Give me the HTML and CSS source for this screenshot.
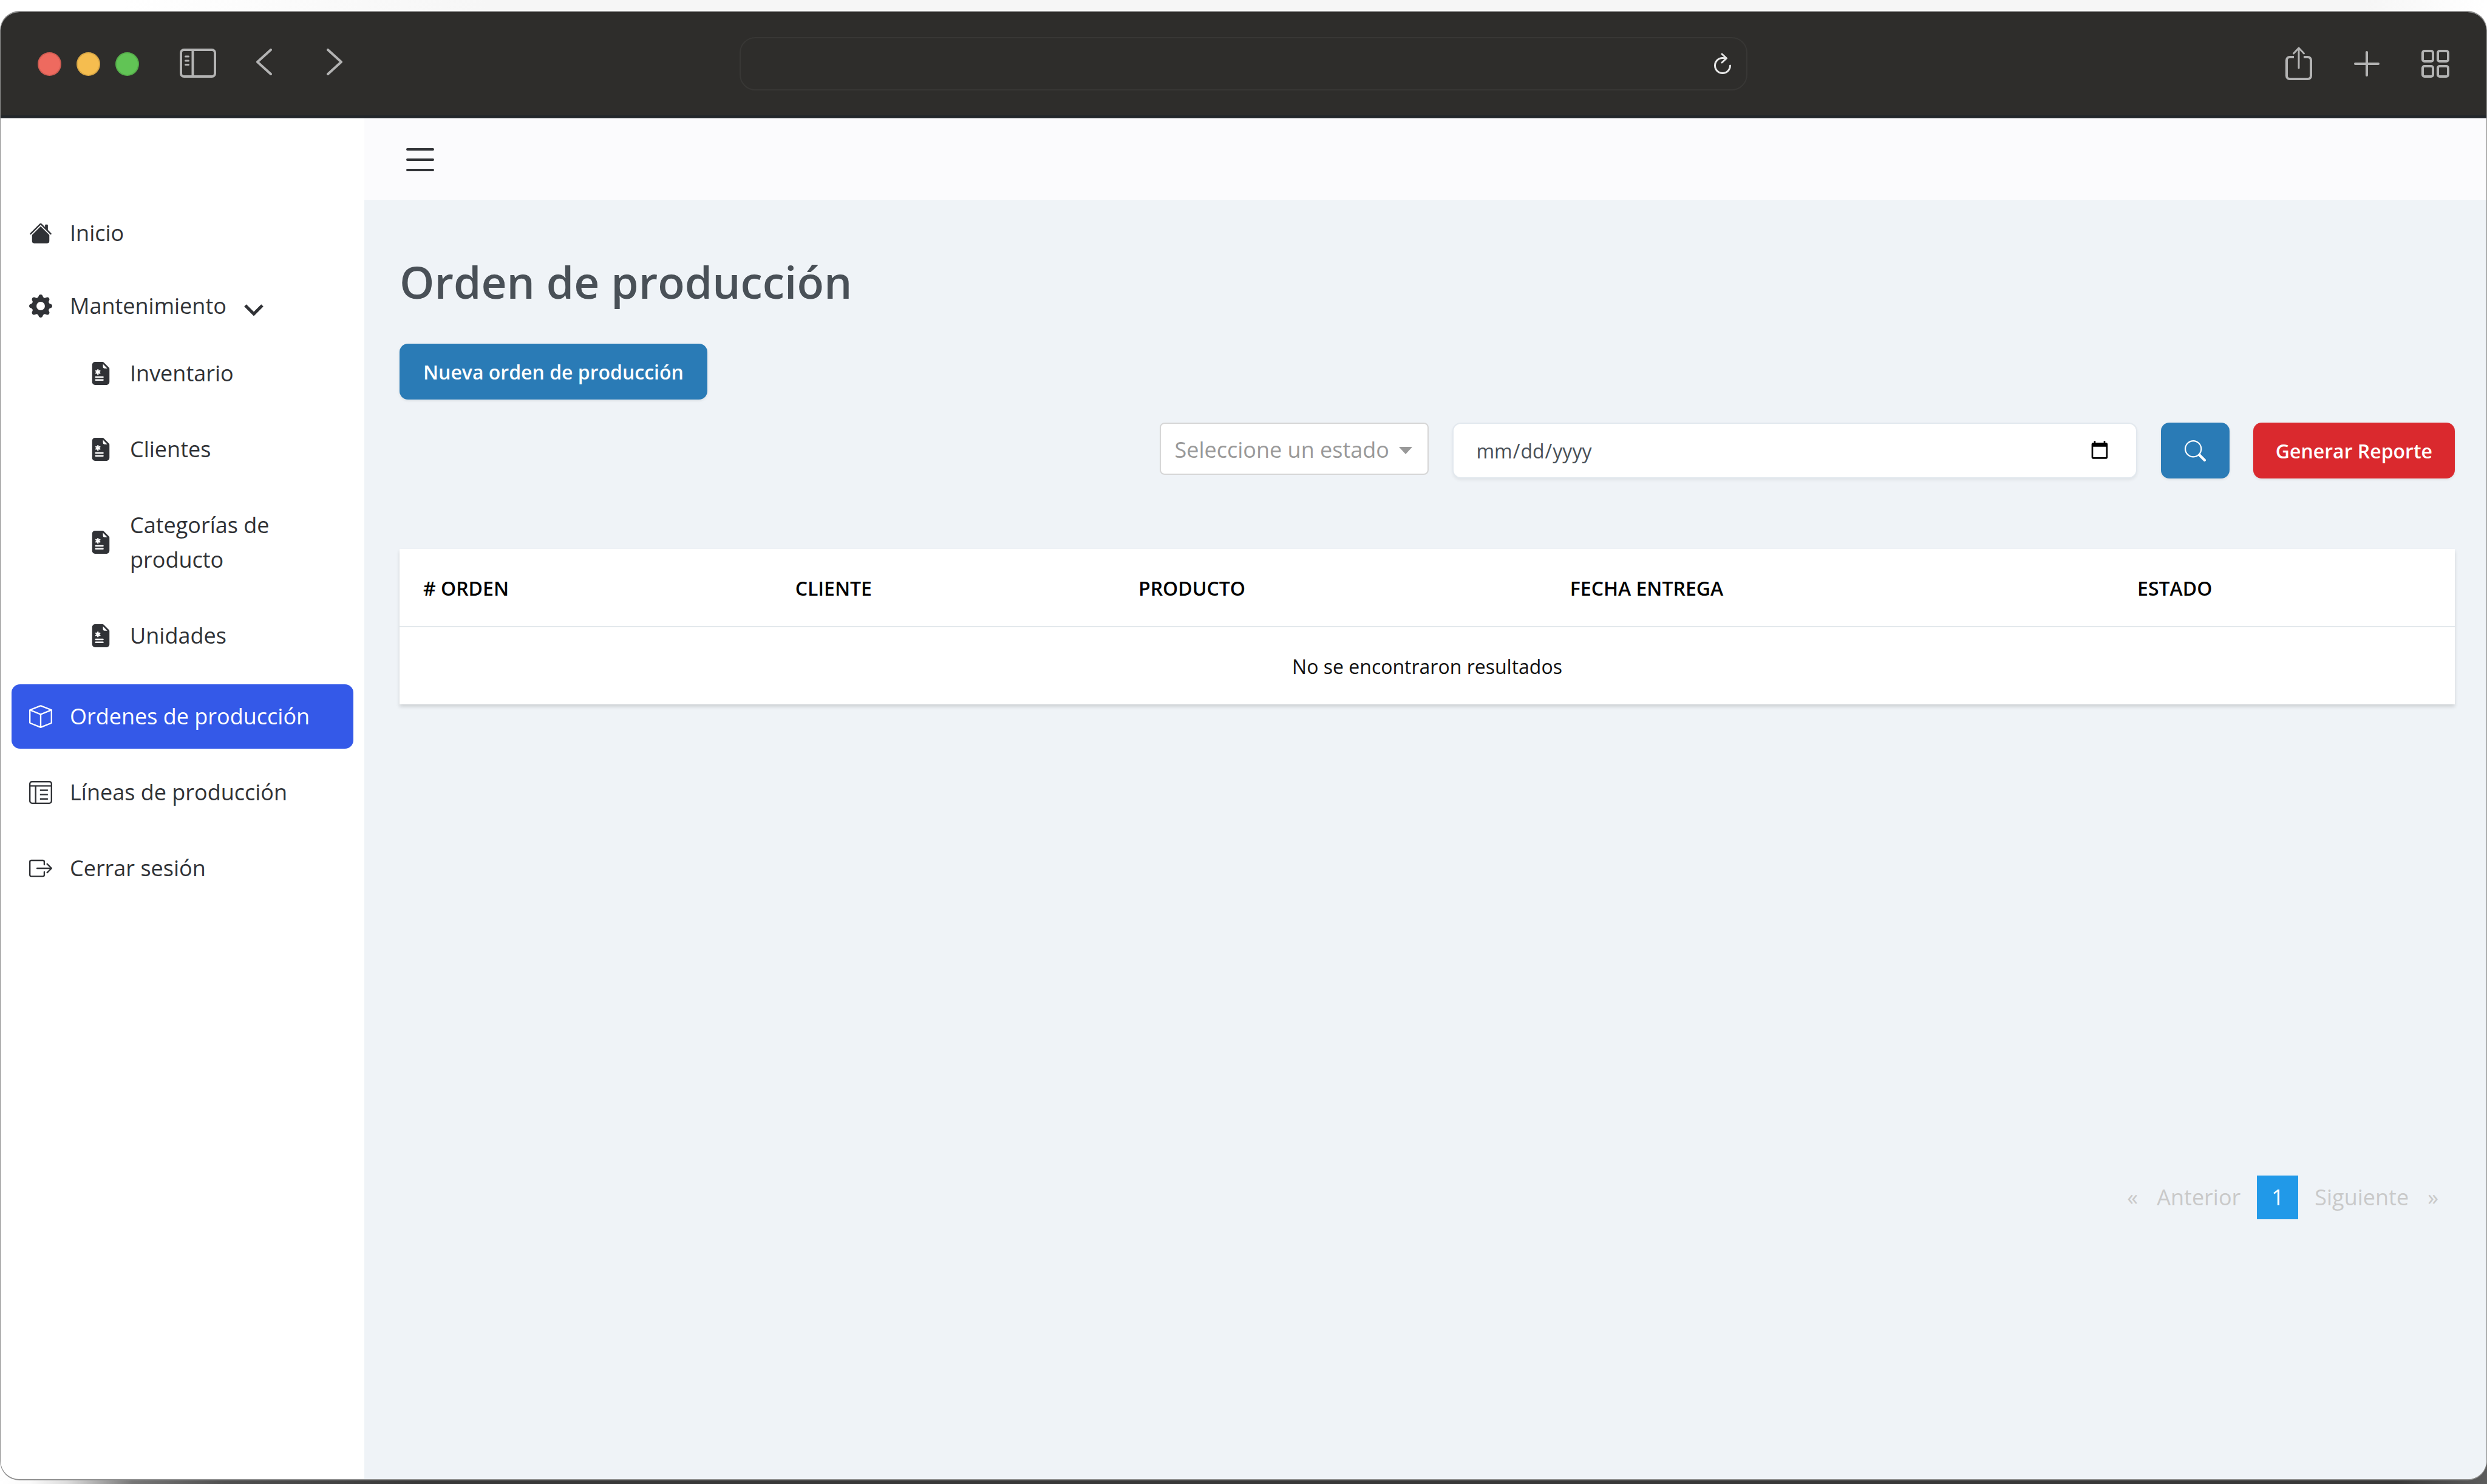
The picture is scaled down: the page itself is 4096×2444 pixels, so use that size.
FILE: index.html
```html
<!DOCTYPE html>
<html lang="es">
<head>
<meta charset="utf-8">
<meta name="viewport" content="width=device-width, initial-scale=1">
<title>Orden de producción</title>
<link rel="stylesheet" href="styles.css">
</head>
<body>
<svg class="sprite" aria-hidden="true">
  <symbol id="i-file" viewBox="0 0 16 16"><path d="M9.293 0H4a2 2 0 0 0-2 2v12a2 2 0 0 0 2 2h8a2 2 0 0 0 2-2V4.707A1 1 0 0 0 13.707 4L10 .293A1 1 0 0 0 9.293 0zM9.5 3.5v-2l3 3h-2a1 1 0 0 1-1-1zm-3 2v.634l.549-.317a.5.5 0 1 1 .5.866L7 7l.549.317a.5.5 0 1 1-.5.866L6.5 7.866V8.5a.5.5 0 0 1-1 0v-.634l-.549.317a.5.5 0 1 1-.5-.866L5 7l-.549-.317a.5.5 0 0 1 .5-.866l.549.317V5.5a.5.5 0 1 1 1 0zm-2 4.5h5a.5.5 0 0 1 0 1h-5a.5.5 0 0 1 0-1zm0 2h5a.5.5 0 0 1 0 1h-5a.5.5 0 0 1 0-1z"/></symbol>
</svg>
<div class="window">
  <header class="toolbar">
    <div class="toolbar-left">
      <div class="lights">
        <span class="light light-close"></span>
        <span class="light light-min"></span>
        <span class="light light-max"></span>
      </div>
      <button class="tool tool-panel" type="button" aria-label="Barra lateral">
        <svg width="60" height="54" viewBox="0 0 60 54" fill="none" stroke="currentColor"><rect x="2" y="4" width="56" height="44" rx="5" stroke-width="4"/><path d="M21.500 4v44" stroke-width="4"/><path d="M9.500 15h5M9.500 22h5M9.500 28.500h5" stroke-width="3" stroke-linecap="round"/></svg>
      </button>
      <button class="tool tool-back" type="button" aria-label="Atrás">
        <svg width="26" height="50" viewBox="0 0 26 50" fill="none" stroke="currentColor" stroke-width="4" stroke-linecap="round" stroke-linejoin="round"><path d="M24 2L2 22l22 20"/></svg>
      </button>
      <button class="tool" type="button" aria-label="Adelante">
        <svg width="26" height="50" viewBox="0 0 26 50" fill="none" stroke="currentColor" stroke-width="4" stroke-linecap="round" stroke-linejoin="round"><path d="M2 2l22 20L2 42"/></svg>
      </button>
    </div>
    <div class="address">
      <input class="address-input" type="text" aria-label="Dirección">
      <button class="tool tool-reload" type="button" aria-label="Recargar">
        <svg width="30" height="36" viewBox="0 0 30 36" fill="none" stroke="currentColor" stroke-width="3" stroke-linecap="round" stroke-linejoin="round"><path d="M15 8.500A12.500 12.500 0 1 0 27.500 21"/><path d="M14 2l7.500 7L14 16"/><path d="M15 8.500l5 .500"/></svg>
      </button>
    </div>
    <div class="toolbar-right">
      <button class="tool" type="button" aria-label="Compartir">
        <svg width="44" height="58" viewBox="0 0 44 58" fill="none" stroke="currentColor" stroke-width="4" stroke-linecap="round" stroke-linejoin="round"><path d="M14 18H7a5 5 0 0 0-5 5v26a5 5 0 0 0 5 5h30a5 5 0 0 0 5-5V23a5 5 0 0 0-5-5h-7" stroke-linecap="butt"/><path d="M22 36V3M13.500 12L22 3l8.500 9" stroke-width="3"/></svg>
      </button>
      <button class="tool" type="button" aria-label="Nueva pestaña">
        <svg width="42" height="42" viewBox="0 0 42 42" fill="none" stroke="currentColor" stroke-width="4" stroke-linecap="round"><path d="M21 2v38M2 21h38"/></svg>
      </button>
      <button class="tool" type="button" aria-label="Pestañas">
        <svg width="46" height="46" viewBox="0 0 46 46" fill="none" stroke="currentColor" stroke-width="4"><rect x="2" y="2" width="17" height="17" rx="3"/><rect x="27" y="2" width="17" height="17" rx="3"/><rect x="2" y="27" width="17" height="17" rx="3"/><rect x="27" y="27" width="17" height="17" rx="3"/></svg>
      </button>
    </div>
  </header>

  <div class="app">
    <nav class="sidebar">
      <ul class="menu">
        <li><a class="item" href="#">
          <svg class="icon" viewBox="0 0 16 16"><path d="M8 3.293l6 6V13.500a1.500 1.500 0 0 1-1.500 1.500h-9A1.500 1.500 0 0 1 2 13.500V9.293l6-6zm5-.793V6l-2-2V2.500a.5.5 0 0 1 .5-.5h1a.5.5 0 0 1 .5.5z"/><path d="M7.293 1.500a1 1 0 0 1 1.414 0l6.647 6.646a.5.5 0 0 1-.708.708L8 2.207 1.354 8.854a.5.5 0 1 1-.708-.708L7.293 1.500z"/></svg>
          <span>Inicio</span></a></li>
        <li>
          <a class="item item-group" href="#" aria-expanded="true">
            <svg class="icon" viewBox="0 0 16 16"><path d="M9.405 1.050c-.413-1.400-2.397-1.400-2.810 0l-.1.340a1.464 1.464 0 0 1-2.105.872l-.310-.170c-1.283-.698-2.686.705-1.987 1.987l.169.311c.446.820.023 1.841-.872 2.105l-.340.100c-1.400.413-1.400 2.397 0 2.810l.340.100a1.464 1.464 0 0 1 .872 2.105l-.170.310c-.698 1.283.705 2.686 1.987 1.987l.311-.169a1.464 1.464 0 0 1 2.105.872l.100.340c.413 1.400 2.397 1.400 2.810 0l.100-.340a1.464 1.464 0 0 1 2.105-.872l.310.170c1.283.698 2.686-.705 1.987-1.987l-.169-.311a1.464 1.464 0 0 1 .872-2.105l.340-.100c1.400-.413 1.400-2.397 0-2.810l-.340-.100a1.464 1.464 0 0 1-.872-2.105l.170-.310c.698-1.283-.705-2.686-1.987-1.987l-.311.169a1.464 1.464 0 0 1-2.105-.872l-.100-.340zM8 10.930a2.929 2.929 0 1 1 0-5.860 2.929 2.929 0 0 1 0 5.858z"/></svg>
            <span>Mantenimiento</span>
            <svg class="caret" viewBox="0 0 32 32" fill="none" stroke="currentColor" stroke-width="5"><path d="M2 15l14 14 14-14"/></svg>
          </a>
          <ul class="submenu">
            <li><a class="item item-sub" href="#"><svg class="icon"><use href="#i-file"/></svg><span>Inventario</span></a></li>
            <li><a class="item item-sub" href="#"><svg class="icon"><use href="#i-file"/></svg><span>Clientes</span></a></li>
            <li><a class="item item-sub" href="#"><svg class="icon"><use href="#i-file"/></svg><span>Categorías de producto</span></a></li>
            <li><a class="item item-sub" href="#"><svg class="icon"><use href="#i-file"/></svg><span>Unidades</span></a></li>
          </ul>
        </li>
        <li><a class="item item-active" href="#" aria-current="page">
          <svg class="icon" viewBox="0 0 16 16"><path d="M8.186 1.113a.5.5 0 0 0-.372 0L1.846 3.500 8 5.961 14.154 3.500 8.186 1.113zM15 4.239l-6.500 2.600v7.922l6.500-2.600V4.240zM7.500 14.762V6.838L1 4.239v7.923l6.500 2.600zM7.443.184a1.500 1.500 0 0 1 1.114 0l7.129 2.852A.5.5 0 0 1 16 3.500v8.662a1 1 0 0 1-.629.928l-7.185 2.874a.5.5 0 0 1-.372 0L.630 13.090a1 1 0 0 1-.630-.928V3.500a.5.5 0 0 1 .314-.464L7.443.184z"/></svg>
          <span>Ordenes de producción</span></a></li>
        <li><a class="item" href="#">
          <svg class="icon icon-line" viewBox="0 0 16 16"><rect x=".5" y=".5" width="15" height="15" rx="1.500"/><path d="M.5 3.500h15M4.500 3.500v12M7.500 6.500h5.500M7.500 9.500h5.500M7.500 12.500h5.500"/></svg>
          <span>Líneas de producción</span></a></li>
        <li><a class="item" href="#">
          <svg class="icon" viewBox="0 0 16 16"><path d="M10 12.500a.5.5 0 0 1-.5.5h-8a.5.5 0 0 1-.5-.5v-9a.5.5 0 0 1 .5-.5h8a.5.5 0 0 1 .5.5v2a.5.5 0 0 0 1 0v-2A1.500 1.500 0 0 0 9.500 2h-8A1.500 1.500 0 0 0 0 3.500v9A1.500 1.500 0 0 0 1.500 14h8a1.500 1.500 0 0 0 1.500-1.500v-2a.5.5 0 0 0-1 0v2z"/><path d="M15.854 8.354a.5.5 0 0 0 0-.708l-3-3a.5.5 0 0 0-.708.708L14.293 7.500H5.500a.5.5 0 0 0 0 1h8.793l-2.147 2.146a.5.5 0 0 0 .708.708l3-3z"/></svg>
          <span>Cerrar sesión</span></a></li>
      </ul>
    </nav>

    <div class="main">
      <div class="topbar">
        <button class="burger" type="button" aria-label="Menú">
          <svg width="46" height="38" viewBox="0 0 46 38" fill="none" stroke="currentColor" stroke-width="4" stroke-linecap="round"><path d="M2 2h42M2 19h42M2 36h42"/></svg>
        </button>
      </div>
      <main class="content">
        <h1 class="title">Orden de producción</h1>
        <button class="btn btn-primary" type="button">Nueva orden de producción</button>

        <form class="filters">
          <div class="select-wrap">
            <select class="select" aria-label="Estado"><option>Seleccione un estado</option></select>
            <svg class="select-arrow" width="22" height="12" viewBox="0 0 22 12" fill="currentColor" aria-hidden="true"><path d="M0 0h22L11 12z"/></svg>
          </div>
          <input class="date" type="date" aria-label="Fecha de entrega">
          <button class="btn btn-primary btn-search" type="button" aria-label="Buscar">
            <svg width="35" height="35" viewBox="0 0 16 16" fill="currentColor"><path d="M11.742 10.344a6.500 6.500 0 1 0-1.397 1.398h-.001c.030.040.062.078.098.115l3.850 3.850a1 1 0 0 0 1.415-1.414l-3.850-3.850a1.007 1.007 0 0 0-.115-.100zM12 6.500a5.500 5.500 0 1 1-11 0 5.500 5.500 0 0 1 11 0z"/></svg>
          </button>
          <button class="btn btn-danger" type="button">Generar Reporte</button>
        </form>

        <table class="orders">
          <colgroup><col class="col-order"><col class="col-client"><col class="col-product"><col class="col-date"><col class="col-state"></colgroup>
          <thead>
            <tr><th scope="col"># ORDEN</th><th scope="col">CLIENTE</th><th scope="col">PRODUCTO</th><th scope="col">FECHA ENTREGA</th><th scope="col">ESTADO</th></tr>
          </thead>
          <tbody>
            <tr><td colspan="5">No se encontraron resultados</td></tr>
          </tbody>
        </table>

        <nav class="pager" aria-label="Paginación">
          <a class="page page-edge" href="#" aria-label="Primera">«</a>
          <a class="page" href="#">Anterior</a>
          <a class="page page-current" href="#" aria-current="page">1</a>
          <a class="page" href="#">Siguiente</a>
          <a class="page page-edge" href="#" aria-label="Última">»</a>
        </nav>
      </main>
    </div>
  </div>
</div>
</body>
</html>
```
FILE: styles.css
```css
*,
*::before,
*::after {
  box-sizing: border-box;
}

body {
  margin: 0;
  min-height: 100vh;
  padding: 18px 0 6px;
  display: flex;
  flex-direction: column;
  font-family: "Open Sans", "Noto Sans", sans-serif;
  font-size: 36px;
  line-height: 57px;
  color: #303236;
  background:
    linear-gradient(to right, #fff 0, #fafafa 50px, #ddd 110px, #777 218px, #505050 370px, #383838 700px, #383838 calc(100% - 150px), #5c5c5c 100%) bottom / 100% 40px no-repeat,
    linear-gradient(to right, #fff 200px, #f6f6f6 800px, #f6f6f6 calc(100% - 200px), #fff 100%);
}

button,
input,
select {
  font: inherit;
  margin: 0;
}

button {
  padding: 0;
  border: 0;
  background: none;
  color: inherit;
}

svg {
  display: block;
  flex: none;
}

.sprite {
  position: absolute;
  width: 0;
  height: 0;
}

.window {
  flex: 1;
  display: flex;
  flex-direction: column;
  overflow: hidden;
  border: solid #8f8f8f;
  border-width: 2px 1px;
  border-radius: 32px;
  background: #fff;
}

/* Browser chrome */
.toolbar {
  display: grid;
  grid-template-columns: 1fr 1660px 1fr;
  align-items: center;
  height: 174px;
  padding: 0 61px;
  background: #2e2d2b;
  border-bottom: 4px solid #22262a;
  color: #b3b3b3;
}

.toolbar-left,
.toolbar-right,
.lights {
  display: flex;
  align-items: center;
}

.lights {
  gap: 25px;
}

.light {
  width: 39px;
  height: 39px;
  border: 2px solid rgba(0, 0, 0, 0.12);
  border-radius: 50%;
}

.light-close { background: #ee6a5f; }
.light-min { background: #f5bd4f; }
.light-max { background: #61c455; }

.tool-panel {
  margin: 0 66px 0 67px;
}

.tool-back {
  margin-right: 90px;
}

.toolbar-right {
  justify-content: flex-end;
  gap: 69px;
}

.address {
  display: flex;
  align-items: center;
  height: 88px;
  padding: 0 24px;
  border: 2px solid #383735;
  border-radius: 26px;
}

.address-input {
  flex: 1;
  border: 0;
  background: none;
  color: inherit;
}

.tool-reload {
  color: #e6e6e6;
}

/* App */
.app {
  flex: 1;
  display: grid;
  grid-template-columns: 599px 1fr;
  border-top: 1px solid #85888a;
}

.sidebar {
  padding: 136px 18px 0;
}

.menu,
.submenu {
  display: flex;
  flex-direction: column;
  margin: 0;
  padding: 0;
  list-style: none;
}

.menu {
  gap: 19px;
}

.submenu {
  gap: 19px;
  padding: 10px 0 8px;
}

.item {
  display: flex;
  align-items: center;
  gap: 29px;
  min-height: 106px;
  padding: 24px 29px 25px;
  border-radius: 14px;
  color: #303236;
  text-decoration: none;
}

.item-group {
  min-height: 96px;
  padding-top: 19px;
  padding-bottom: 20px;
}

.item-sub {
  padding-left: 128px;
  padding-right: 60px;
}

.item-active {
  background: #3459e8;
  color: #fff;
}

.icon {
  width: 38px;
  height: 38px;
  fill: currentColor;
}

.icon-line {
  fill: none;
  stroke: currentColor;
}

.caret {
  width: 32px;
  height: 32px;
}

.main {
  display: flex;
  flex-direction: column;
  background: #eff3f7;
}

.topbar {
  display: flex;
  align-items: center;
  height: 134px;
  padding: 2px 69px 0;
  background: #fbfbfd;
}

.content {
  display: flex;
  flex-direction: column;
  align-items: flex-start;
  padding: 91px 52px 91px 58px;
}

.title {
  margin: 0 0 58px;
  font-size: 73px;
  line-height: 88px;
  font-weight: 600;
  color: #495057;
}

.btn {
  height: 92px;
  padding: 0 39px;
  border-radius: 14px;
  box-shadow: 0 2px 4px rgba(0, 0, 0, 0.08);
  font-size: 32px;
  font-weight: 600;
  color: #fff;
  white-space: nowrap;
}

.btn-primary { background: #2a7bb6; }

.btn-danger {
  padding: 0 37px;
  background: #da292e;
}

.filters {
  display: flex;
  align-items: flex-start;
  align-self: stretch;
  gap: 39px;
  margin: 38px 0 116px 37%;
}

.select-wrap {
  display: grid;
  align-items: center;
  width: 443px;
}

.select,
.select-arrow {
  grid-area: 1 / 1;
}

.select {
  appearance: none;
  width: 100%;
  height: 86px;
  padding: 2px 22px 0;
  border: 2px solid #d6d6d6;
  border-radius: 8px;
  background: #fff;
  color: #999;
}

.select-arrow {
  justify-self: end;
  margin: 6px 27px 0 0;
  color: #999;
  pointer-events: none;
}

.date {
  flex: 1;
  height: 92px;
  padding: 0 43px 0 36px;
  border: 2px solid #e2e8ee;
  border-radius: 14px;
  background: #fff;
  box-shadow: 0 3px 5px rgba(0, 0, 0, 0.06);
  font-size: 32px;
  color: #495057;
}

.date::-webkit-calendar-picker-indicator {
  width: 34px;
  height: 34px;
  padding: 0;
}

.btn-search {
  display: grid;
  place-items: center;
}

.orders {
  width: 100%;
  table-layout: fixed;
  border-collapse: collapse;
  background: #fff;
  box-shadow: 0 4px 6px rgba(0, 0, 0, 0.14);
}

.col-order { width: 18.1%; }
.col-client { width: 16.7%; }
.col-product { width: 21%; }
.col-date { width: 27.6%; }
.col-state { width: 16.6%; }

.orders th,
.orders td {
  height: 128px;
  padding: 2px 39px 0;
}

.orders th {
  border-bottom: 2px solid #e3e8ec;
  font-size: 32px;
  font-weight: 600;
  text-align: left;
  color: #000;
}

.orders td {
  font-size: 32px;
  text-align: center;
  color: #111;
}

.pager {
  display: flex;
  align-items: center;
  align-self: flex-end;
  gap: 27px;
  margin-top: 776px;
  padding-right: 23px;
}

.page {
  color: #c9c9c9;
  line-height: 72px;
  text-decoration: none;
}

.page-edge {
  padding: 0 4px;
}

.page-current {
  width: 68px;
  background: #2199e8;
  color: #fff;
  text-align: center;
}
```
